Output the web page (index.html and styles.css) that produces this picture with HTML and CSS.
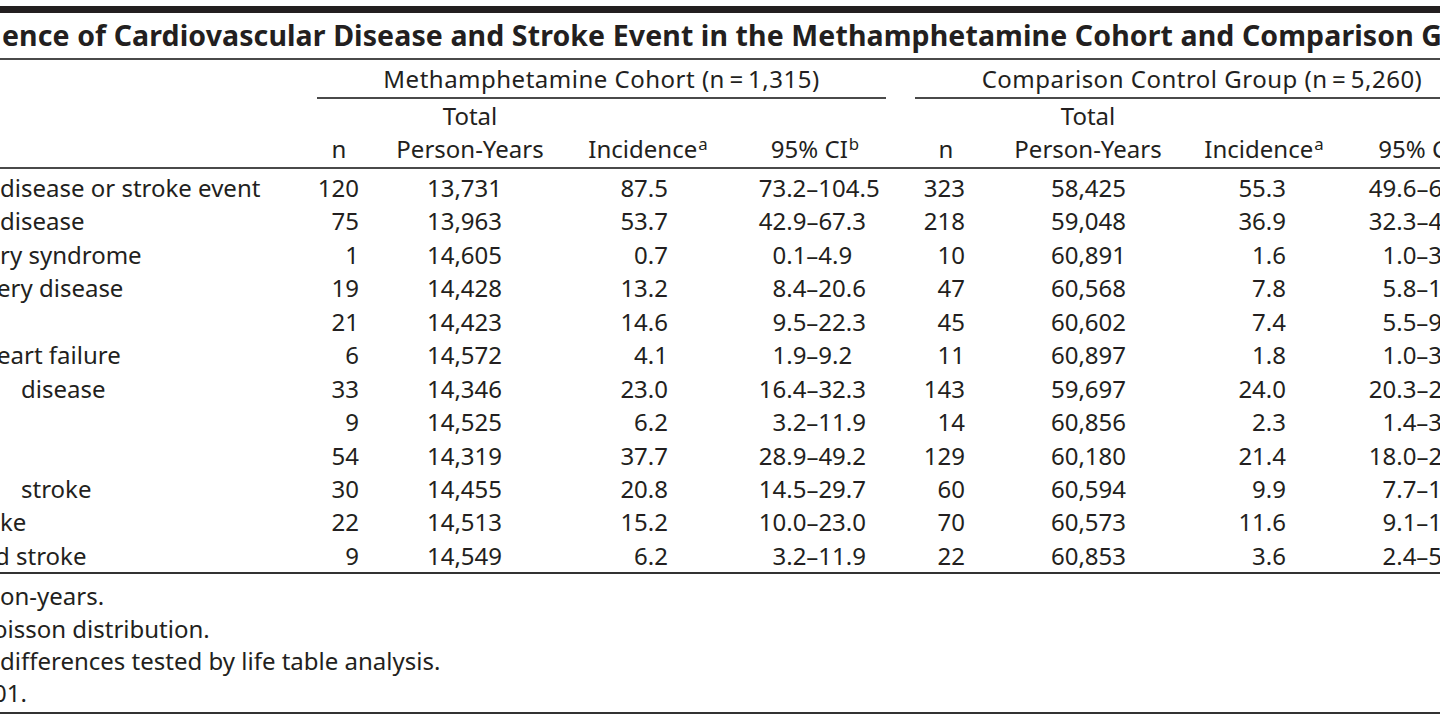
FILE: index.html
```html
<!DOCTYPE html>
<html lang="en">
<head>
<meta charset="utf-8">
<title>Incidence of Cardiovascular Disease and Stroke Event</title>
<link rel="stylesheet" href="styles.css">
</head>
<body>
<div class="page">
  <div class="title">ence of Cardiovascular Disease and Stroke Event in the Methamphetamine Cohort and Comparison Group</div>

  <div class="row group-row">
    <div class="c"></div>
    <div class="c grp grp1">Methamphetamine Cohort (n&#8201;=&#8201;1,315)</div>
    <div class="c"></div>
    <div class="c grp grp2">Comparison Control Group (n&#8201;=&#8201;5,260)</div>
  </div>

  <div class="row col-row">
    <div class="c"></div>
    <div class="c hd"><span>n</span></div>
    <div class="c hd"><span>Total</span><span>Person-Years</span></div>
    <div class="c hd"><span>Incidence<sup>a</sup></span></div>
    <div class="c hd ci-h"><span>95% CI<sup>b</sup></span></div>
    <div class="c"></div>
    <div class="c hd"><span>n</span></div>
    <div class="c hd"><span>Total</span><span>Person-Years</span></div>
    <div class="c hd"><span>Incidence<sup>a</sup></span></div>
    <div class="c hd ci-h"><span>95% CI<sup>b</sup></span></div>
  </div>

  <div class="body">
    <div class="row data"><div class="lbl">disease or stroke event</div><div class="num n1"><span class="v">120</span></div><div class="num py1"><span class="v">13,731</span></div><div class="num inc1"><span class="v">87.5</span></div><div class="num ci1"><span class="v wide">73.2–104.5</span></div><div></div><div class="num n2"><span class="v">323</span></div><div class="num py2"><span class="v">58,425</span></div><div class="num inc2"><span class="v">55.3</span></div><div class="num ci2"><span class="v">49.6–61.7</span></div></div>
    <div class="row data"><div class="lbl">disease</div><div class="num n1"><span class="v">75</span></div><div class="num py1"><span class="v">13,963</span></div><div class="num inc1"><span class="v">53.7</span></div><div class="num ci1"><span class="v">42.9–67.3</span></div><div></div><div class="num n2"><span class="v">218</span></div><div class="num py2"><span class="v">59,048</span></div><div class="num inc2"><span class="v">36.9</span></div><div class="num ci2"><span class="v">32.3–42.2</span></div></div>
    <div class="row data"><div class="lbl">ry syndrome</div><div class="num n1"><span class="v">1</span></div><div class="num py1"><span class="v">14,605</span></div><div class="num inc1"><span class="v">0.7</span></div><div class="num ci1"><span class="v">0.1–4.9<span class="fig">0</span></span></div><div></div><div class="num n2"><span class="v">10</span></div><div class="num py2"><span class="v">60,891</span></div><div class="num inc2"><span class="v">1.6</span></div><div class="num ci2"><span class="v">1.0–3.0<span class="fig">0</span></span></div></div>
    <div class="row data"><div class="lbl cut">ery disease</div><div class="num n1"><span class="v">19</span></div><div class="num py1"><span class="v">14,428</span></div><div class="num inc1"><span class="v">13.2</span></div><div class="num ci1"><span class="v">8.4–20.6</span></div><div></div><div class="num n2"><span class="v">47</span></div><div class="num py2"><span class="v">60,568</span></div><div class="num inc2"><span class="v">7.8</span></div><div class="num ci2"><span class="v">5.8–10.4</span></div></div>
    <div class="row data"><div class="lbl"></div><div class="num n1"><span class="v">21</span></div><div class="num py1"><span class="v">14,423</span></div><div class="num inc1"><span class="v">14.6</span></div><div class="num ci1"><span class="v">9.5–22.3</span></div><div></div><div class="num n2"><span class="v">45</span></div><div class="num py2"><span class="v">60,602</span></div><div class="num inc2"><span class="v">7.4</span></div><div class="num ci2"><span class="v">5.5–9.9<span class="fig">0</span></span></div></div>
    <div class="row data"><div class="lbl cut">eart failure</div><div class="num n1"><span class="v">6</span></div><div class="num py1"><span class="v">14,572</span></div><div class="num inc1"><span class="v">4.1</span></div><div class="num ci1"><span class="v">1.9–9.2<span class="fig">0</span></span></div><div></div><div class="num n2"><span class="v">11</span></div><div class="num py2"><span class="v">60,897</span></div><div class="num inc2"><span class="v">1.8</span></div><div class="num ci2"><span class="v">1.0–3.3<span class="fig">0</span></span></div></div>
    <div class="row data"><div class="lbl ind">disease</div><div class="num n1"><span class="v">33</span></div><div class="num py1"><span class="v">14,346</span></div><div class="num inc1"><span class="v">23.0</span></div><div class="num ci1"><span class="v">16.4–32.3</span></div><div></div><div class="num n2"><span class="v">143</span></div><div class="num py2"><span class="v">59,697</span></div><div class="num inc2"><span class="v">24.0</span></div><div class="num ci2"><span class="v">20.3–28.3</span></div></div>
    <div class="row data"><div class="lbl"></div><div class="num n1"><span class="v">9</span></div><div class="num py1"><span class="v">14,525</span></div><div class="num inc1"><span class="v">6.2</span></div><div class="num ci1"><span class="v">3.2–11.9</span></div><div></div><div class="num n2"><span class="v">14</span></div><div class="num py2"><span class="v">60,856</span></div><div class="num inc2"><span class="v">2.3</span></div><div class="num ci2"><span class="v">1.4–3.9<span class="fig">0</span></span></div></div>
    <div class="row data"><div class="lbl"></div><div class="num n1"><span class="v">54</span></div><div class="num py1"><span class="v">14,319</span></div><div class="num inc1"><span class="v">37.7</span></div><div class="num ci1"><span class="v">28.9–49.2</span></div><div></div><div class="num n2"><span class="v">129</span></div><div class="num py2"><span class="v">60,180</span></div><div class="num inc2"><span class="v">21.4</span></div><div class="num ci2"><span class="v">18.0–25.5</span></div></div>
    <div class="row data"><div class="lbl ind">stroke</div><div class="num n1"><span class="v">30</span></div><div class="num py1"><span class="v">14,455</span></div><div class="num inc1"><span class="v">20.8</span></div><div class="num ci1"><span class="v">14.5–29.7</span></div><div></div><div class="num n2"><span class="v">60</span></div><div class="num py2"><span class="v">60,594</span></div><div class="num inc2"><span class="v">9.9</span></div><div class="num ci2"><span class="v">7.7–12.8</span></div></div>
    <div class="row data"><div class="lbl">ke</div><div class="num n1"><span class="v">22</span></div><div class="num py1"><span class="v">14,513</span></div><div class="num inc1"><span class="v">15.2</span></div><div class="num ci1"><span class="v">10.0–23.0</span></div><div></div><div class="num n2"><span class="v">70</span></div><div class="num py2"><span class="v">60,573</span></div><div class="num inc2"><span class="v">11.6</span></div><div class="num ci2"><span class="v">9.1–14.6</span></div></div>
    <div class="row data"><div class="lbl cut2">d stroke</div><div class="num n1"><span class="v">9</span></div><div class="num py1"><span class="v">14,549</span></div><div class="num inc1"><span class="v">6.2</span></div><div class="num ci1"><span class="v">3.2–11.9</span></div><div></div><div class="num n2"><span class="v">22</span></div><div class="num py2"><span class="v">60,853</span></div><div class="num inc2"><span class="v">3.6</span></div><div class="num ci2"><span class="v">2.4–5.5<span class="fig">0</span></span></div></div>
  </div>

  <div class="notes">
    <p class="note">on-years.</p>
    <p class="note cut3">oisson distribution.</p>
    <p class="note">differences tested by life table analysis.</p>
    <p class="note cut3">01.</p>
  </div>
</div>
</body>
</html>
```
FILE: styles.css
```css
html, body {
  margin: 0;
  padding: 0;
  background: #ffffff;
}
body {
  width: 1440px;
  height: 720px;
  overflow: hidden;
  font-family: "Noto Sans", "Open Sans", sans-serif;
  font-size: 24px;
  color: #231f20;
}
.page {
  padding-top: 6px;
  width: 1489px;
}

/* title */
.title {
  border-top: 7px solid #231f20;
  border-bottom: 2px solid #4a4a4a;
  height: 45px;
  line-height: 45px;
  font-size: 28.5px;
  font-weight: bold;
  letter-spacing: 0.1px;
  padding-left: 2px;
  white-space: nowrap;
}

/* shared column grid */
.row {
  display: grid;
  grid-template-columns: 317px 44px 218px 138px 169px 29px 62px 222px 130px 160px;
  width: 1489px;
}
.row > div {
  min-width: 0;
  white-space: nowrap;
}

/* group header */
.group-row .c {
  height: 37px;
  line-height: 37px;
}
.group-row .grp {
  grid-column: span 4;
  display: flex;
  justify-content: center;
  letter-spacing: 0.5px;
  border-bottom: 2px solid #4a4a4a;
}

/* column header */
.col-row {
  padding-bottom: 2px;
  border-bottom: 2px solid #4a4a4a;
}
.col-row .c {
  height: 66px;
  line-height: 33px;
}
.col-row .hd {
  display: flex;
  flex-direction: column;
  justify-content: flex-end;
  align-items: center;
}
.col-row .hd span {
  flex-shrink: 0;
}
.col-row .ci-h {
  padding-left: 27px;
}
sup {
  font-size: 0.7em;
  line-height: 0;
  vertical-align: 0.45em;
  margin-left: 1px;
}

/* body */
.body {
  padding-top: 2px;
}
.data {
  height: 33.45px;
  line-height: 33.45px;
}
.data:last-child {
  border-bottom: 2px solid #333333;
}
.lbl.cut { text-indent: -3px; }
.lbl.cut2 { text-indent: -5px; }
.lbl.ind { padding-left: 21px; }

.num {
  display: flex;
  justify-content: flex-end;
  align-items: center;
}
.v {
  display: inline-block;
  flex-shrink: 0;
}
.wide { margin-right: -13.7px; }
.fig { visibility: hidden; }

.n1 { padding-right: 2px; }
.py1 { padding-right: 77px; }
.inc1 { padding-right: 49px; }
.ci1 { padding-right: 20px; }
.n2 { padding-right: 12px; }
.py2 { padding-right: 73px; }
.inc2 { padding-right: 43px; }
.ci2 { padding-right: 13px; }

/* footnotes */
.notes {
  width: 1489px;
  padding-top: 6px;
  padding-bottom: 3px;
  border-bottom: 2px solid #333333;
}
.note {
  margin: 0;
  line-height: 32.3px;
  white-space: nowrap;
}
.note.cut3 { text-indent: -7px; }
```
